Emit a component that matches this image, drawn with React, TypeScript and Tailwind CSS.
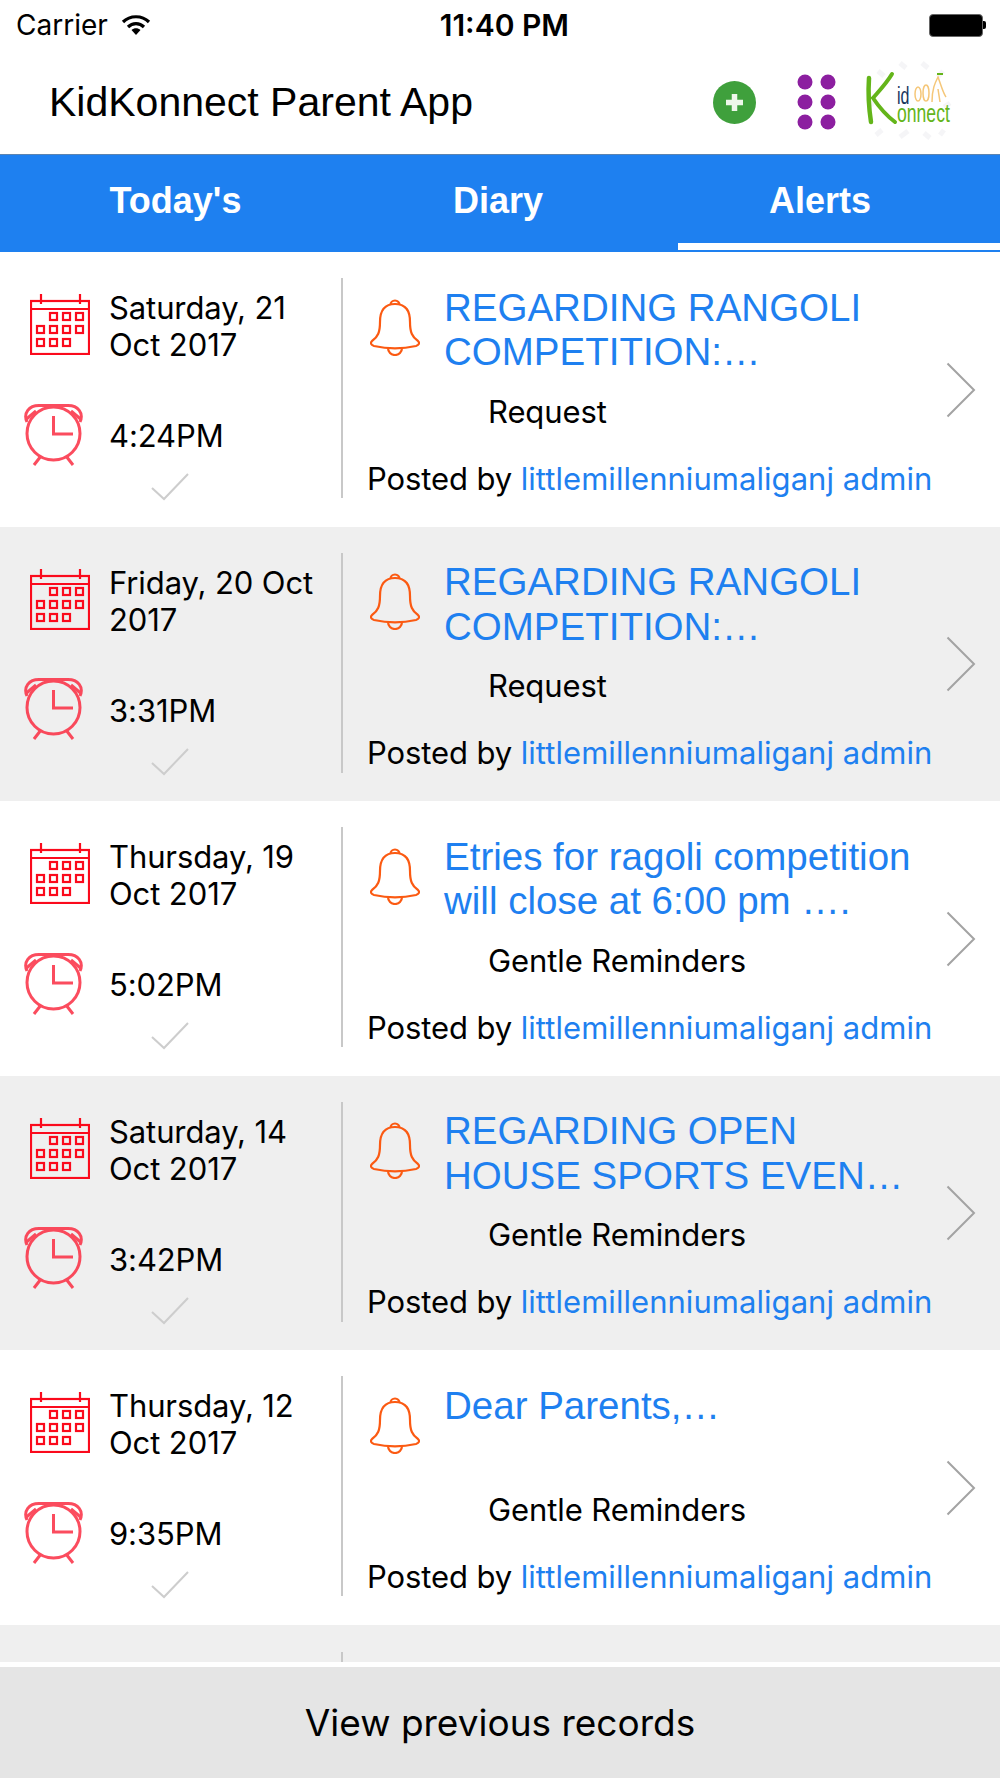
import React from "react";

const BLUE = "text-[#1e80f0]";

type Item = { date: string[]; time: string; title: string[]; cat: string };

const items: Item[] = [
  { date: ["Saturday, 21", "Oct 2017"], time: "4:24PM", title: ["REGARDING RANGOLI", "COMPETITION:…"], cat: "Request" },
  { date: ["Friday, 20 Oct", "2017"], time: "3:31PM", title: ["REGARDING RANGOLI", "COMPETITION:…"], cat: "Request" },
  { date: ["Thursday, 19", "Oct 2017"], time: "5:02PM", title: ["Etries for ragoli competition", "will close at 6:00 pm …."], cat: "Gentle Reminders" },
  { date: ["Saturday, 14", "Oct 2017"], time: "3:42PM", title: ["REGARDING OPEN", "HOUSE SPORTS EVEN…"], cat: "Gentle Reminders" },
  { date: ["Thursday, 12", "Oct 2017"], time: "9:35PM", title: ["Dear Parents,…"], cat: "Gentle Reminders" },
];

function CalendarIcon() {
  const cells: [number, number][] = [
    [20, 19], [33, 19], [46, 19],
    [7, 32], [20, 32], [33, 32], [46, 32],
    [7, 45], [20, 45], [33, 45],
  ];
  return (
    <svg width="60" height="61" viewBox="0 0 60 61" className="shrink-0">
      <g fill="none" stroke="#fb0a1c" strokeWidth="2.2">
        <rect x="1" y="7" width="58" height="53" />
        <path d="M1 15H59" />
        <path d="M11 0V10M50 0V10" />
        {cells.map(([x, y]) => (
          <rect key={`${x}-${y}`} x={x} y={y} width="7" height="7" />
        ))}
      </g>
    </svg>
  );
}

function AlarmIcon() {
  return (
    <svg width="60" height="62" viewBox="0 0 60 62" className="shrink-0">
      <g fill="none" stroke="#fb2d42" strokeWidth="3" opacity="0.85">
        <circle cx="29.5" cy="29.5" r="26.5" />
        <path d="M29.5 12V30H49" />
        <path d="M3 18C-1 9 5 1.5 15 1.5H44C54 1.5 60 9 56 18" />
        <path d="M2.5 15L12 7M56.5 15L47 7" />
        <path d="M17 52L10 61M42 52L49 61" />
      </g>
    </svg>
  );
}

function BellIcon() {
  return (
    <svg width="50" height="58" viewBox="0 0 50 58" className="shrink-0">
      <g fill="none" stroke="#fb5a12" strokeWidth="2.2" strokeLinejoin="round">
        <path d="M20.5 7A4.5 4.5 0 1 1 29.5 7" />
        <path d="M25 6C13 6 10 14 10 24C10 34 8 39 2 43C0 45 1 47 4 48C17 51 33 51 46 48C49 47 50 45 48 43C42 39 40 34 40 24C40 14 37 6 25 6Z" />
        <path d="M18 50C18 54 21 57 25 57C29 57 32 54 32 50" />
      </g>
    </svg>
  );
}

function Row({ item, shaded }: { item: Item; shaded: boolean }) {
  return (
    <div className={`flex h-[274.5px] shrink-0 pt-[25px] ${shaded ? "bg-[#efefef]" : "bg-white"}`}>
      <div className="flex w-[341px] shrink-0 flex-col">
        <div className="flex h-[123px] pl-[30px] pt-[17px]">
          <CalendarIcon />
          <div className="-mt-[5px] ml-[19px] text-[31px] leading-[37px] tracking-[-0.1px] text-black">
            {item.date.map((d) => (
              <div key={d} className="whitespace-nowrap">{d}</div>
            ))}
          </div>
        </div>
        <div className="flex h-[69px] items-center pl-[24px]">
          <AlarmIcon />
          <div className="ml-[25px] mt-[2px] text-[31px] leading-[37px] tracking-[-0.1px] text-black">{item.time}</div>
        </div>
        <div className="mt-[4px] pl-[151px]">
          <svg width="38" height="28" viewBox="0 0 38 28" className="block">
            <path d="M1 15L13 26L37 1" fill="none" stroke="#cdcdcd" strokeWidth="2" />
          </svg>
        </div>
      </div>
      <div className="mt-[1px] h-[220px] w-[2px] shrink-0 bg-[#c8c8c8]" />
      <div className="flex min-w-0 flex-1 items-center pb-[24px]">
        <div className="h-[220px] w-[603px] shrink-0 pl-[24px] pt-[6px]">
          <div className="flex h-[103px]">
            <div className="ml-[3px] pt-[12px]"><BellIcon /></div>
            <div className={`ml-[24px] whitespace-nowrap font-['Liberation_Sans',sans-serif] text-[38.5px] leading-[44.5px] ${BLUE}`}>
              {item.title.map((t) => (
                <div key={t}>{t}</div>
              ))}
            </div>
          </div>
          <div className="mt-[4px] pl-[121px] text-[31px] leading-[37px] tracking-[-0.1px] text-black">{item.cat}</div>
          <div className="mt-[30px] whitespace-nowrap text-[31px] leading-[37px] tracking-[-0.1px] text-black">
            Posted by <span className={`tracking-[0.05px] ${BLUE}`}>littlemillenniumaliganj admin</span>
          </div>
        </div>
        <svg width="30" height="56" viewBox="0 0 30 56" className="shrink-0">
          <path d="M1.5 1.5L28 28L1.5 54.5" fill="none" stroke="#a3a3a3" strokeWidth="2" />
        </svg>
      </div>
    </div>
  );
}

function Logo() {
  return (
    <svg width="90" height="90" viewBox="0 0 90 90" className="shrink-0">
      <g fill="none" stroke="#f3f3f5" strokeWidth="5" opacity="0.8">
        <path d="M14 14l6 5M36 6l6 5M58 6l6 5M74 20l5-6M4 44l6 4M80 50l6-4M12 78l6-5M36 80l8-6M60 76l6 5M76 78l4-5" />
      </g>
      <path d="M5 21C4 36 5 52 7 65" fill="none" stroke="#64b51a" strokeWidth="4.5" strokeLinecap="round" />
      <path d="M28 17C22 27 15 34 9 41C15 50 23 59 31 65" fill="none" stroke="#64b51a" strokeWidth="4" strokeLinecap="round" />
      <text transform="translate(33 46.5) scale(0.8 1.15)" fontFamily="'Liberation Sans', sans-serif" fontSize="20" fill="#17365d">id</text>
      <text transform="translate(33 65) scale(0.88 1.3)" fontFamily="'Liberation Sans', sans-serif" fontSize="20" fill="#64b51a">onnect</text>
      <g fill="none" stroke="#f5c779" strokeWidth="1.5">
        <ellipse cx="54" cy="37" rx="3" ry="7" />
        <ellipse cx="62" cy="36" rx="3" ry="8" />
        <path d="M68 45C68 32 71 26 74 20C77 28 79 36 82 40M74 32L76 45" />
      </g>
      <path d="M73 17H79" stroke="#64b51a" strokeWidth="2" />
    </svg>
  );
}

export default function App() {
  return (
    <div className="flex h-[1778px] w-[1000px] flex-col overflow-hidden bg-white font-['Inter','Roboto',sans-serif]">
      <div className="flex h-[50px] shrink-0 items-center pl-[16px] pr-[14px] text-black">
        <span className="text-[28px] leading-none">Carrier</span>
        <svg width="30" height="22" viewBox="0 0 30 22" className="ml-[13px]">
          <g fill="none" stroke="#000" strokeWidth="3.2">
            <path d="M2 8C9 1 21 1 28 8" />
            <path d="M7 13C11.5 8.5 18.5 8.5 23 13" />
          </g>
          <path d="M10.5 16C13 13.8 17 13.8 19.5 16L15 21Z" fill="#000" />
        </svg>
        <span className="flex-1 pr-[71px] text-center text-[30px] font-semibold leading-none">11:40 PM</span>
        <div className="flex items-center">
          <div className="h-[23px] w-[54px] rounded-[4px] border border-[#666666] bg-black" />
          <div className="h-[8px] w-[3px] rounded-r-[2px] bg-black" />
        </div>
      </div>

      <div className="flex h-[105px] shrink-0 items-center border-b border-[#5c84b0] pl-[49px]">
        <span className="flex-1 font-['Liberation_Sans',sans-serif] text-[41px] leading-none text-black">KidKonnect Parent App</span>
        <svg width="43" height="43" viewBox="0 0 43 43" className="mr-[41px] shrink-0">
          <circle cx="21.5" cy="21.5" r="21.5" fill="#3fa03c" />
          <path d="M21.5 13V30M13 21.5H30" stroke="#eef7ea" strokeWidth="5.5" />
        </svg>
        <svg width="40" height="56" viewBox="0 0 40 56" className="mr-[27px] shrink-0">
          {[8, 28, 48].flatMap((y) =>
            [8, 31].map((x) => <circle key={`${x}-${y}`} cx={x} cy={y} r="7.5" fill="#8c1fa0" />),
          )}
        </svg>
        <div className="mr-[46px]"><Logo /></div>
      </div>

      <div className="flex h-[97px] shrink-0 bg-[#1e80f0] pb-[2px] font-['Liberation_Sans',sans-serif] text-[36px] font-bold text-white">
        <div className="flex w-[351px] items-center justify-center pb-[3px]">Today's</div>
        <div className="flex w-[294px] items-center justify-center pb-[3px]">Diary</div>
        <div className="ml-[33px] flex w-[322px] items-center justify-center border-b-[7px] border-white pr-[38px] pt-[4px]">Alerts</div>
      </div>

      <div className="flex min-h-0 flex-1 flex-col overflow-hidden">
        {items.map((item, i) => (
          <Row key={i} item={item} shaded={i % 2 === 1} />
        ))}
        <div className="flex-1 bg-[#efefef] pl-[341px] pt-[27px]">
          <div className="h-full w-[2px] bg-[#c8c8c8]" />
        </div>
      </div>

      <div className="mt-[5px] flex h-[111px] shrink-0 items-center justify-center bg-[#e5e5e5] text-[37px] leading-none text-black">
        View previous records
      </div>
    </div>
  );
}
